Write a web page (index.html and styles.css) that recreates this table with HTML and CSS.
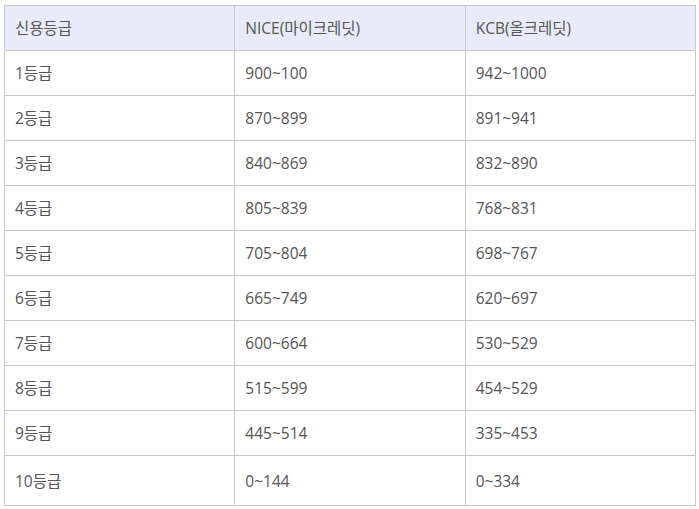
FILE: index.html
```html
<!DOCTYPE html>
<html lang="ko">
<head>
<meta charset="utf-8">
<link rel="stylesheet" href="styles.css">
</head>
<body>
<table class="grade-table">
  <thead>
    <tr><th>신용등급</th><th>NICE(마이크레딧)</th><th>KCB(올크레딧)</th></tr>
  </thead>
  <tbody>
    <tr><td>1등급</td><td>900~100</td><td>942~1000</td></tr>
    <tr><td>2등급</td><td>870~899</td><td>891~941</td></tr>
    <tr><td>3등급</td><td>840~869</td><td>832~890</td></tr>
    <tr><td>4등급</td><td>805~839</td><td>768~831</td></tr>
    <tr><td>5등급</td><td>705~804</td><td>698~767</td></tr>
    <tr><td>6등급</td><td>665~749</td><td>620~697</td></tr>
    <tr><td>7등급</td><td>600~664</td><td>530~529</td></tr>
    <tr><td>8등급</td><td>515~599</td><td>454~529</td></tr>
    <tr><td>9등급</td><td>445~514</td><td>335~453</td></tr>
    <tr class="last"><td>10등급</td><td>0~144</td><td>0~334</td></tr>
  </tbody>
</table>
</body>
</html>
```

FILE: styles.css
```css
html, body {
  margin: 0;
  background: #fff;
}
body {
  padding: 5px 0 0 4px;
  font-family: "Open Sans", "Noto Sans CJK KR", sans-serif;
  font-size: 15.5px;
  color: #555;
}
.grade-table {
  border-collapse: collapse;
  width: 692px;
  table-layout: fixed;
}
.grade-table th,
.grade-table td {
  border: 1px solid #c8c8c8;
  height: 45px;
  padding: 0 0 0 10px;
  text-align: left;
  vertical-align: middle;
  font-weight: normal;
  box-sizing: border-box;
  line-height: 20px;
}
.grade-table th {
  background: #e9ecf8;
  height: 45px;
}
.grade-table tr.last td {
  height: 50px;
}
```
